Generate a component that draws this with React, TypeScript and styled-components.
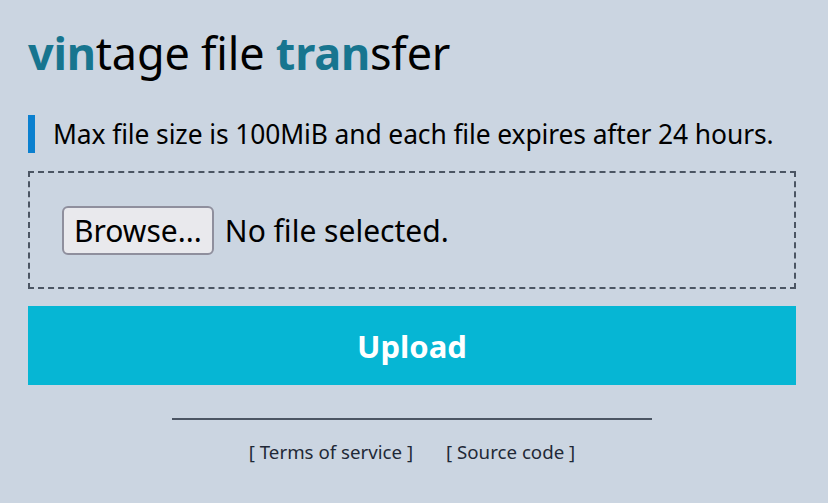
import styled, { createGlobalStyle } from 'styled-components';

const GlobalStyle = createGlobalStyle`
  html, body {
    margin: 0;
    padding: 0;
    background: #cbd5e1;
  }
  body {
    font-family: "Noto Sans", "Open Sans", sans-serif;
    color: #000;
  }
`;

const App = () => {
  return (
    <>
      <GlobalStyle />
      <Page>
        <Title>
          <Accent>vin</Accent>tage file <Accent>tran</Accent>sfer
        </Title>
        <Notice>Max file size is 100MiB and each file expires after 24 hours.</Notice>
        <DropZone>
          <BrowseButton type="button">Browse...</BrowseButton>
          <FileName>No file selected.</FileName>
        </DropZone>
        <UploadButton type="button">Upload</UploadButton>
        <Footer>
          <Rule />
          <Links>
            <FooterLink href="#">[ Terms of service ]</FooterLink>
            <FooterLink href="#">[ Source code ]</FooterLink>
          </Links>
        </Footer>
      </Page>
    </>
  );
};

export default App;

const Page = styled.main`
  width: 768px;
  margin: 0 0 0 28px;
  padding-top: 22px;
  display: flex;
  flex-direction: column;
`;

const Title = styled.h1`
  margin: 0;
  font-size: 45px;
  font-weight: 400;
  line-height: 62px;
  letter-spacing: -0.2px;
`;

const Accent = styled.span`
  color: #17758f;
  font-weight: 700;
`;

const Notice = styled.p`
  margin: 31px 0 0;
  border-left: 7px solid #0b80cf;
  padding-left: 18px;
  font-size: 26.4px;
  line-height: 38px;
  letter-spacing: -0.1px;
`;

const DropZone = styled.div`
  margin-top: 18px;
  height: 118px;
  box-sizing: border-box;
  border: 2px dashed #4b5563;
  padding: 0 32px;
  display: flex;
  align-items: center;
  gap: 11px;
`;

const BrowseButton = styled.button`
  font-family: inherit;
  font-size: 30px;
  height: 49px;
  padding: 0 10px;
  background: #e9e9ed;
  color: #000;
  border: 2px solid #8f8f9d;
  border-radius: 6px;
`;

const FileName = styled.span`
  font-size: 30px;
`;

const UploadButton = styled.button`
  margin-top: 17px;
  height: 79px;
  border: none;
  background: #06b6d4;
  color: #fff;
  font-family: inherit;
  font-size: 31px;
  font-weight: 700;
`;

const Footer = styled.footer`
  margin-top: 33px;
  display: flex;
  flex-direction: column;
  align-items: center;
`;

const Rule = styled.hr`
  width: 480px;
  margin: 0;
  border: none;
  border-top: 2px solid #4b5563;
`;

const Links = styled.nav`
  margin-top: 19px;
  display: flex;
  gap: 33px;
`;

const FooterLink = styled.a`
  font-size: 18.7px;
  color: #1f2937;
  text-decoration: none;
`;
